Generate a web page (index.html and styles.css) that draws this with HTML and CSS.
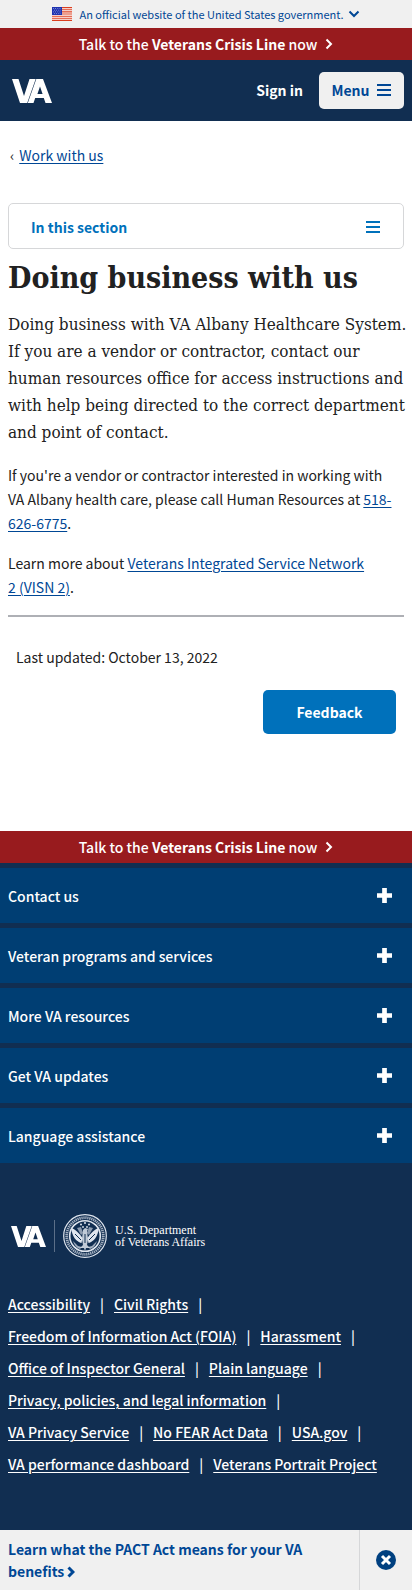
FILE: index.html
```html
<!DOCTYPE html>
<html lang="en">
<head>
<meta charset="utf-8">
<meta name="viewport" content="width=device-width, initial-scale=1">
<title>Doing business with us</title>
<link rel="stylesheet" href="styles.css">
</head>
<body>
<button class="gov-banner" type="button">
  <svg class="flag" viewBox="0 0 20 14" aria-hidden="true"><path fill="#fff" d="M0 0h20v14H0z"/><path stroke="#db3e1f" stroke-width="1.1" d="M0 .6h20M0 2.8h20M0 4.9h20M0 7h20M0 9.2h20M0 11.3h20M0 13.4h20"/><path fill="#1e33b1" d="M0 0h10v8H0z"/><path stroke="#fff" stroke-width=".5" stroke-dasharray=".8 1.4" d="M1 1.5h8.500M2 3.200h7M1 4.900h8.500M2 6.600h7"/></svg>
  <span>An official website of the United States government.</span>
  <svg class="chev-down" viewBox="0 0 12 8" aria-hidden="true"><path d="M1.500 1.500 6 6l4.500-4.500" fill="none" stroke="currentColor" stroke-width="2"/></svg>
</button>
<a class="crisis" href="#crisis"><span>Talk to the <b>Veterans Crisis Line</b> now</span><svg class="chev" viewBox="0 0 8 12" aria-hidden="true"><path d="m1.500 1.500 4.500 4.500-4.500 4.500" fill="none" stroke="currentColor" stroke-width="2"/></svg></a>
<header class="header">
  <a class="logo" href="#home" aria-label="VA"><svg viewBox="0 0 40 24" aria-hidden="true"><path fill="#fff" fill-rule="evenodd" d="M0 0h6.500L12 17 17.500 0h6.200L15.200 24H8zM24.300 0H31l9 24h-6.500l-1.700-5h-8.600L21.500 24h-5.700zM28 7.500l-2.600 7.500h5.200z"/></svg></a>
  <nav class="header-nav">
    <button class="signin" type="button">Sign in</button>
    <button class="menu" type="button">Menu <svg class="bars" viewBox="0 0 14 12" aria-hidden="true"><path d="M0 1h14M0 6h14M0 11h14" stroke="currentColor" stroke-width="2"/></svg></button>
  </nav>
</header>
<main class="main">
  <nav class="crumb"><span>‹</span><a href="#work">Work with us</a></nav>
  <button class="section-nav" type="button">In this section <svg class="bars" viewBox="0 0 14 12" aria-hidden="true"><path d="M0 1h14M0 6h14M0 11h14" stroke="currentColor" stroke-width="2"/></svg></button>
  <h1>Doing business with us</h1>
  <p class="intro">Doing business with VA Albany Healthcare System. If you are a vendor or contractor, contact our human resources office for access instructions and with help being directed to the correct department and point of contact.</p>
  <p>If you're a vendor or contractor interested in working with VA&nbsp;Albany health care, please call Human Resources at <a href="#tel">518-<wbr>626-6775</a>.</p>
  <p>Learn more about <a href="#visn">Veterans Integrated Service Network 2&nbsp;(VISN&nbsp;2)</a>.</p>
  <hr>
  <div class="updated">Last updated: October 13, 2022</div>
  <div class="feedback-row"><button class="feedback" type="button">Feedback</button></div>
</main>
<footer class="footer">
  <a class="crisis" href="#crisis"><span>Talk to the <b>Veterans Crisis Line</b> now</span><svg class="chev" viewBox="0 0 8 12" aria-hidden="true"><path d="m1.500 1.500 4.500 4.500-4.500 4.500" fill="none" stroke="currentColor" stroke-width="2"/></svg></a>
  <div class="accordion">
    <button type="button">Contact us <svg viewBox="0 0 16 16" aria-hidden="true"><path d="M8 0v16M0 8h16" stroke="#fff" stroke-width="5"/></svg></button>
    <button type="button">Veteran programs and services <svg viewBox="0 0 16 16" aria-hidden="true"><path d="M8 0v16M0 8h16" stroke="#fff" stroke-width="5"/></svg></button>
    <button type="button">More VA resources <svg viewBox="0 0 16 16" aria-hidden="true"><path d="M8 0v16M0 8h16" stroke="#fff" stroke-width="5"/></svg></button>
    <button type="button">Get VA updates <svg viewBox="0 0 16 16" aria-hidden="true"><path d="M8 0v16M0 8h16" stroke="#fff" stroke-width="5"/></svg></button>
    <button type="button">Language assistance <svg viewBox="0 0 16 16" aria-hidden="true"><path d="M8 0v16M0 8h16" stroke="#fff" stroke-width="5"/></svg></button>
  </div>
  <a class="dept" href="#home">
    <svg class="dept-va" viewBox="0 0 40 24" aria-hidden="true"><path fill="#fff" fill-rule="evenodd" d="M0 0h6.500L12 17 17.500 0h6.200L15.200 24H8zM24.300 0H31l9 24h-6.500l-1.700-5h-8.600L21.500 24h-5.700zM28 7.500l-2.600 7.500h5.200z"/></svg>
    <span class="rule"></span>
    <svg class="seal" viewBox="0 0 44 44" aria-hidden="true"><g fill="none" stroke="#dfe5ee"><circle cx="22" cy="22" r="21.300" stroke-width="1.200"/><circle cx="22" cy="22" r="18.300" stroke-width="2.800" stroke-dasharray="1.300 .7" opacity=".7"/><circle cx="22" cy="22" r="15.300" stroke-width="1.600"/></g><g fill="#dfe5ee"><path d="M8.500 14c3 1 8 5 11 10l-1 5c-5-1-10-7-10-15zM35.500 14c-3 1-8 5-11 10l1 5c5-1 10-7 10-15z"/><path d="M20 16l2-2 3 1-1 2 1 8-1 6 3 3h-4l-1 3-1-3h-4l3-3-1-6z" opacity=".85"/><path d="M10 27l5 5 4 1-2 2c-3-1-6-4-7-8zM34 27l-5 5-4 1 2 2c3-1 6-4 7-8z" opacity=".7"/><circle cx="18" cy="10.500" r="1"/><circle cx="22" cy="9" r="1"/><circle cx="26" cy="10.500" r="1"/><circle cx="20" cy="13" r=".9"/><circle cx="24" cy="13" r=".9"/><path d="m14 14 4-1 2 6-2 2zM30 14l-4-1-2 6 2 2z" opacity=".6"/></g><path d="m12 20 6 6M32 20l-6 6M22 20v9M14 28l4 2M30 28l-4 2" stroke="#112e51" stroke-width="1"/></svg>
    <span class="dept-name">U.S. Department<br>of Veterans Affairs</span>
  </a>
  <ul class="links">
    <li><a href="#1">Accessibility</a></li><li><a href="#2">Civil Rights</a></li><li><a href="#3">Freedom of Information Act (FOIA)</a></li><li><a href="#4">Harassment</a></li><li><a href="#5">Office of Inspector General</a></li><li><a href="#6">Plain language</a></li><li><a href="#7">Privacy, policies, and legal information</a></li><li><a href="#8">VA Privacy Service</a></li><li><a href="#9">No FEAR Act Data</a></li><li><a href="#10">USA.gov</a></li><li><a href="#11">VA performance dashboard</a></li><li><a href="#12">Veterans Portrait Project</a></li>
  </ul>
</footer>
<aside class="promo">
  <a href="#pact">Learn what the PACT Act means for your VA benefits <svg class="promo-chev" viewBox="0 0 8 12" aria-hidden="true"><path d="m1.500 1.500 4.500 4.500-4.500 4.500" fill="none" stroke="currentColor" stroke-width="3"/></svg></a>
  <button type="button" aria-label="Dismiss"><svg viewBox="0 0 20 20" aria-hidden="true"><circle cx="10" cy="10" r="10" fill="#004080"/><path d="m6 6 8 8m0-8-8 8" stroke="#fff" stroke-width="3"/></svg></button>
</aside>
</body>
</html>
```
FILE: styles.css
```css
* { box-sizing: border-box; }
body {
  margin: 0;
  background: #fff;
  color: #212121;
  font: 14px/24px "Noto Sans CJK SC", "Noto Sans", sans-serif;
}
button { border: 0; padding: 0; background: none; color: inherit; font: inherit; cursor: pointer; }
svg { display: block; flex: none; }
a { color: #004795; text-underline-offset: 2px; }
.gov-banner {
  display: flex; align-items: center; justify-content: center; gap: 7px;
  width: 100%; height: 28px; background: #f0f0f0; color: #004795; font-size: 11px;
}
.gov-banner .chev-down { margin-left: -3px; }
.flag { width: 20px; height: 14px; }
.chev-down { width: 12px; height: 8px; }
.crisis {
  display: flex; align-items: center; justify-content: center; gap: 8px;
  height: 32px; background: #981b1e; color: #fff; font-weight: 500; text-decoration: none;
}
.crisis b { font-weight: 700; }
.chev { width: 8px; height: 12px; }
.header {
  display: flex; align-items: center; justify-content: space-between;
  height: 61px; padding: 0 8px 0 12px; background: #112e51; color: #fff;
}
.logo svg { width: 40px; height: 24px; }
.header-nav { display: flex; align-items: center; gap: 16px; }
.signin, .menu { padding-bottom: 2px; font-weight: 700; }
.menu {
  display: flex; align-items: center; justify-content: center; gap: 8px;
  width: 85px; height: 37px; border-radius: 5px; background: #f0f0f0; color: #004795;
}
.bars { width: 14px; height: 12px; }
.main { padding: 22px 8px 97px; }
.crumb { display: flex; gap: 5px; padding-left: 2px; margin-bottom: 36px; }
.section-nav {
  display: flex; align-items: center; justify-content: space-between;
  width: 100%; height: 46px; padding: 2px 23px 0 22px;
  border: 1px solid #d6d7d9; border-radius: 5px; color: #0071bb; font-weight: 700;
}
h1 { margin: 8px 0 12px; font: 700 30px/42px "DejaVu Serif Condensed", "DejaVu Serif", serif; }
p { margin: 0 0 16px; }
.intro { margin: 0 -4px 17px 0; font: 17px/27px "DejaVu Serif Condensed", "DejaVu Serif", serif; }
hr { height: 2px; margin: 0; border: 0; background: #aeb0b5; }
.updated { padding: 28px 8px 21px; }
.feedback-row { display: flex; justify-content: flex-end; padding-right: 8px; }
.feedback { width: 133px; height: 44px; border-radius: 5px; background: #0071bb; color: #fff; font-weight: 700; }
.footer { background: #112e51; color: #fff; padding-bottom: 50px; }
.accordion { display: grid; gap: 5px; padding-top: 5px; font-weight: 500; }
.accordion button {
  display: flex; align-items: center; justify-content: space-between;
  height: 55px; padding: 0 20px 0 8px; background: #003e73;
}
.accordion svg { width: 15px; height: 15px; }
.dept { display: flex; align-items: center; padding: 51px 12px 30px 11px; color: #fff; text-decoration: none; }
.dept-va { width: 35px; height: 21px; }
.rule { width: 1px; height: 32px; margin: 0 8px; background: #5b6f88; }
.seal { width: 44px; height: 44px; }
.dept-name { margin-left: 8px; font: 12px/12px "Liberation Serif", serif; }
.links { display: flex; flex-wrap: wrap; margin: 0; padding: 0 8px; list-style: none; font-weight: 500; line-height: 32px; }
.links a { color: #fff; }
.links li:not(:last-child)::after { content: "|"; margin: 0 10px; }
.promo { display: flex; height: 60px; background: #f0f0f0; color: #004795; font-weight: 700; line-height: 22px; }
.promo a { flex: 1; padding: 8px 40px 0 8px; text-decoration: none; }
.promo-chev { display: inline-block; width: 8px; height: 12px; vertical-align: -1px; }
.promo button { display: grid; place-items: center; width: 53px; border-left: 1px solid #d6d7d9; }
.promo button svg { width: 20px; height: 20px; }
```
